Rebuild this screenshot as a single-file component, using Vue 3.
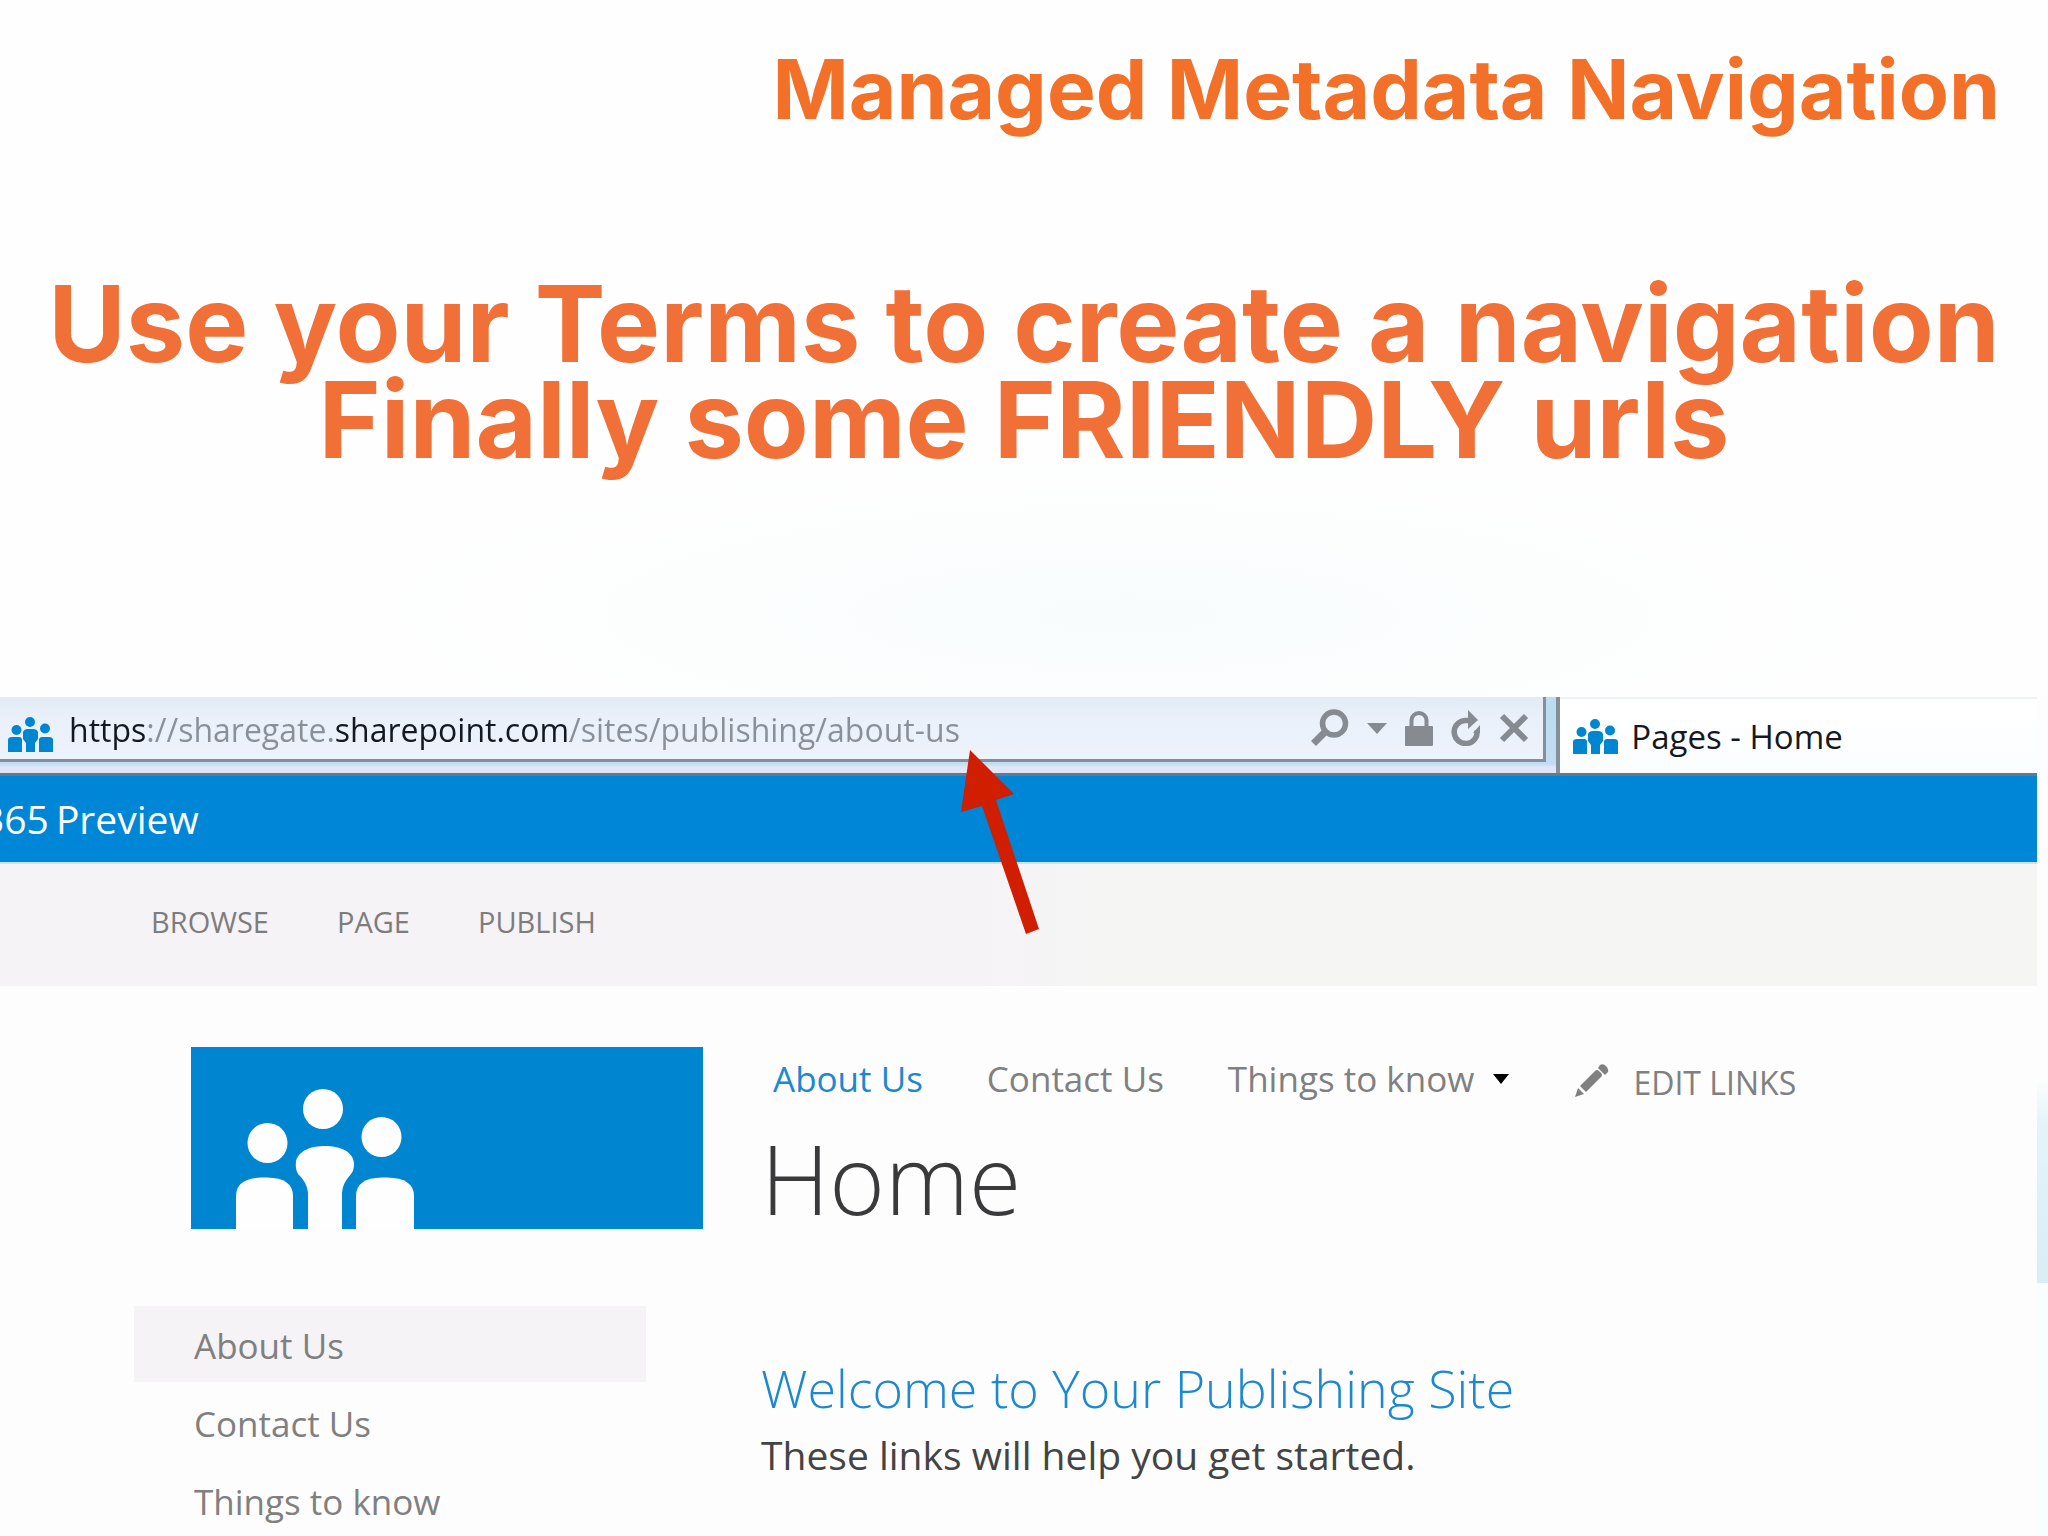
<template>
  <main class="slide">
    <svg class="defs" aria-hidden="true">
      <symbol id="people" viewBox="0 0 178 140">
        <ellipse cx="31.5" cy="54" rx="20" ry="20" />
        <ellipse cx="87" cy="20" rx="20" ry="20" />
        <ellipse cx="145.5" cy="48" rx="20" ry="20" />
        <path d="M0 140V107Q0 89 26 88.500H31Q57 89 57 107V140Z" />
        <path d="M72 140V104Q71 93 62 85Q59 80 60 72C63 61 76 57 89 57C103 57 117 62 118 74Q118 82 115 85Q106 95 106 104V140Z" />
        <path d="M120 140V107Q120 89 146 88.500H151Q178 89 178 107V140Z" />
      </symbol>
      <symbol id="people-small" viewBox="0 0 45 35">
        <ellipse cx="8.5" cy="13" rx="5" ry="5" />
        <ellipse cx="22" cy="5" rx="5" ry="5" />
        <ellipse cx="37" cy="11.5" rx="5" ry="5" />
        <path d="M0 35V23Q0 20 4 20H11Q14 20 14 23V35Z" />
        <path d="M18 35V26L15 22V15Q16 12 20 12H25Q29 12 30 15V22L27 26V35Z" />
        <path d="M31 35V23Q31 20 34 20H41Q45 20 45 23V35Z" />
      </symbol>
    </svg>

    <h1>Managed Metadata Navigation</h1>
    <p class="tagline">Use your Terms to create a navigation<br />Finally some FRIENDLY urls</p>

    <section class="browser">
      <header class="chrome">
        <div class="address-frame">
          <div class="address">
            <svg class="favicon low"><use href="#people-small" /></svg>
            <input v-model="url" class="url" type="text" aria-label="Address" spellcheck="false" />
            <div class="tools">
              <button type="button" aria-label="Search">
                <svg width="38" height="38" viewBox="0 0 38 38">
                  <circle cx="23" cy="14.5" r="11.5" fill="none" stroke="currentColor" stroke-width="5.5" />
                  <path d="M14.5 22.5L2.5 34.5" stroke="currentColor" stroke-width="7" />
                </svg>
              </button>
              <button type="button" aria-label="Show suggestions">
                <svg width="20" height="11" viewBox="0 0 20 11"><path d="M0 0H20L10 11Z" fill="currentColor" /></svg>
              </button>
              <button type="button" aria-label="Security report">
                <svg width="28" height="35" viewBox="0 0 28 35">
                  <path d="M6.5 17V9.5a7.5 7.5 0 0 1 15 0V17" fill="none" stroke="currentColor" stroke-width="4" />
                  <rect y="15" width="28" height="20" rx="1" fill="currentColor" />
                </svg>
              </button>
              <button type="button" aria-label="Refresh">
                <svg width="30" height="36" viewBox="0 0 30 36">
                  <path d="M17 10.5H14A11.5 11.5 0 1 0 26 20" fill="none" stroke="currentColor" stroke-width="5.5" />
                  <path d="M17 0L27 10L17 19Z" fill="currentColor" />
                  <path d="M29 15V23L22 23Z" fill="currentColor" />
                </svg>
              </button>
              <button type="button" aria-label="Stop">
                <svg width="30" height="30" viewBox="0 0 30 30">
                  <path d="M3 3L27 27M27 3L3 27" stroke="currentColor" stroke-width="6" />
                </svg>
              </button>
            </div>
          </div>
        </div>
        <div class="tab">
          <svg class="favicon"><use href="#people-small" /></svg>
          <span>Pages - Home</span>
        </div>
      </header>

      <div class="suite"><span>365</span><span>Preview</span></div>

      <nav class="ribbon" aria-label="Ribbon">
        <a v-for="item in ribbon" :key="item" href="#">{{ item }}</a>
      </nav>

      <div class="page">
        <aside>
          <a class="logo" href="#" aria-label="Site home"><svg><use href="#people" /></svg></a>
          <nav class="side-nav" aria-label="Current">
            <a v-for="item in links" :key="item" href="#" :class="{ selected: item === current }">{{ item }}</a>
          </nav>
        </aside>

        <div class="content">
          <nav class="top-nav" aria-label="Global">
            <a v-for="item in links" :key="item" href="#" :class="{ selected: item === current }">
              {{ item }}
              <svg v-if="item === 'Things to know'" class="caret" viewBox="0 0 16 10"><path d="M0 0H16L8 10Z" /></svg>
            </a>
            <button class="edit" type="button">
              <svg width="34" height="33" viewBox="0 0 34 33" fill="currentColor">
                <path d="M0 33L3 24L9 30Z" />
                <path d="M5 22L20 7Q22 5 24 7L26 9Q28 11 26 13L11 28Z" />
                <path d="M23 4L25 1Q28 -1 31 2Q34 5 33 8L30 11Z" />
              </svg>
              EDIT LINKS
            </button>
          </nav>
          <h2>Home</h2>
          <h3>Welcome to Your Publishing Site</h3>
          <p class="intro">These links will help you get started.</p>
        </div>
      </div>

      <!-- pointer towards the friendly part of the url -->
      <svg class="pointer" viewBox="0 0 78 186" aria-hidden="true">
        <path d="M9 0L53 44L35 50L78 179L65 184L21 56L0 62Z" />
      </svg>
    </section>
  </main>
</template>

<script setup>
import { ref } from 'vue'

const url = ref('https://sharegate.sharepoint.com/sites/publishing/about-us')
const ribbon = ['BROWSE', 'PAGE', 'PUBLISH']
const links = ['About Us', 'Contact Us', 'Things to know']
const current = 'About Us'
</script>

<style>
body {
  margin: 0;
}
</style>

<style scoped>
.slide {
  height: 100vh;
  overflow: hidden;
  background:
    radial-gradient(ellipse 36% 10% at 55% 40%, #f8fcfd, transparent),
    #fefefe;
  font-family: "Open Sans", "Noto Sans", sans-serif;
}

.defs {
  position: absolute;
  width: 0;
  height: 0;
}

a {
  color: inherit;
  text-decoration: none;
}

button {
  display: flex;
  align-items: center;
  padding: 0;
  border: 0;
  background: none;
  color: inherit;
  font: inherit;
}

h1,
.tagline {
  margin: 0;
  font-family: Inter, sans-serif;
  font-weight: 700;
  line-height: 96px;
  white-space: nowrap;
}

h1 {
  padding: 42px 48px 0;
  font-size: 82px;
  text-align: right;
  color: #f37029;
}

.tagline {
  margin-top: 138px;
  font-size: 106px;
  text-align: center;
  color: #f07038;
}

/* Browser window */
.browser {
  position: relative;
  margin-top: 229px;
  border: solid;
  border-width: 0 11px 0 0;
  border-image: linear-gradient(#fdfdfd 45%, #e4f4f9 50%, #d8edf6 69%, #f8fdfe 69%) 1;
  background: #fdfdfd;
}

.chrome {
  display: flex;
  height: 76px;
  border-bottom: 3px solid #66788a;
  background: #fcfdff;
}

.address-frame {
  flex: 0 0 76.6%;
  box-sizing: border-box;
  padding: 0 10px 11px 0;
  border-right: 4px solid #848f9d;
  background: linear-gradient(#bcdcf0, #c2dcf2 88%, #dfe6f7 92%);
}

.address {
  display: flex;
  align-items: center;
  box-sizing: border-box;
  height: 100%;
  padding: 0 14px 0 8px;
  border: solid #848f9d;
  border-width: 0 3px 3px 0;
  background: linear-gradient(#e2ebf5, #eaf1fa 40%, #edf2fb);
}

.favicon {
  flex: none;
  width: 45px;
  height: 35px;
  fill: #0086d1;
}

.low {
  margin-top: 12px;
}

/* Only the scheme and the domain are dark */
.url {
  flex: 1;
  min-width: 0;
  margin-left: 16px;
  padding: 4px 0 0;
  border: 0;
  background: linear-gradient(
    90deg,
    #15191f 76px,
    #8b9097 76px 265px,
    #15191f 265px 501px,
    #8b9097 501px
  );
  background-clip: text;
  color: transparent;
  font: 32px/48px "Open Sans", sans-serif;
}

.tools {
  display: flex;
  align-items: center;
  gap: 18px;
  color: #868b92;
}

.tab {
  display: flex;
  flex: 1;
  align-items: center;
  gap: 13px;
  padding-left: 13px;
  border-top: 2px solid #eff2f6;
  background: linear-gradient(#fff, #fafdff);
  color: #15191f;
  font-size: 33px;
}

.suite {
  display: flex;
  gap: 7px;
  margin-left: -18px;
  background: #0086d6;
  color: #fff;
  font-size: 39px;
  line-height: 86px;
}

.ribbon {
  display: flex;
  gap: 68px;
  padding: 0 151px 6px;
  border-top: 2px solid #c5e3f3;
  background: linear-gradient(90deg, #f5f3f6 48%, #f5f5f4 54%);
  color: #7d7d7d;
  font-size: 29px;
  line-height: 116px;
}

/* Site page */
.page {
  display: flex;
  height: 560px;
  color: #808080;
  font-size: 35px;
}

aside {
  flex: 0 0 761px;
  padding-top: 61px;
}

.logo {
  display: flex;
  align-items: flex-end;
  width: 467px;
  height: 182px;
  margin-left: 191px;
  padding-left: 45px;
  background: #0086d1;
}

.logo svg {
  width: 178px;
  height: 140px;
  fill: #fefefe;
}

.side-nav {
  display: flex;
  flex-direction: column;
  gap: 2px;
  width: 512px;
  margin: 77px 0 0 134px;
}

.side-nav a {
  padding: 4px 0 0 60px;
  line-height: 72px;
}

.side-nav .selected {
  background: #f5f3f6;
}

.content {
  flex: 1;
  padding-top: 69px;
}

.top-nav {
  display: flex;
  gap: 64px;
  padding-left: 12px;
  line-height: 48px;
  white-space: nowrap;
}

.top-nav .selected {
  color: #1c88d0;
}

.caret {
  width: 16px;
  height: 10px;
  margin: 0 0 8px 10px;
  fill: #000;
}

.edit {
  gap: 24px;
  padding: 4px 0 0 2px;
  font-size: 32px;
}

.edit svg {
  margin-bottom: 6px;
}

h2,
h3,
.intro {
  margin: 0;
  font-weight: 300;
}

h2 {
  margin-top: 16px;
  color: #3a3a3c;
  font-size: 95px;
  line-height: 110px;
}

h3 {
  margin-top: 123px;
  color: #1c88d0;
  font-size: 52px;
  line-height: 64px;
}

.intro {
  margin-top: 9px;
  color: #444;
  font-size: 39px;
  font-weight: 400;
  line-height: 52px;
}

.pointer {
  position: absolute;
  top: 53px;
  left: 961px;
  width: 78px;
  height: 186px;
  fill: #cf1e00;
}
</style>
